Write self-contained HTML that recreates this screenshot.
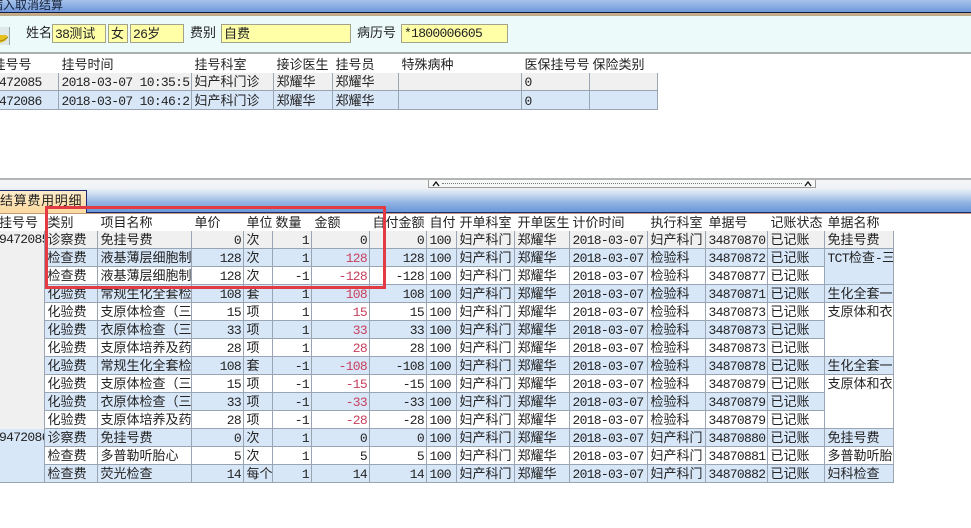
<!DOCTYPE html>
<html lang="zh"><head><meta charset="utf-8"><title>病人取消结算</title>
<style>
html,body{margin:0;padding:0;background:#fff}
body{width:971px;height:528px;overflow:hidden;position:relative;font:13px/18px "Liberation Sans","Noto Sans CJK SC",sans-serif;color:#222}
.a{position:absolute}
.l{position:absolute;white-space:nowrap}
.f{position:absolute;top:24px;height:19px;box-sizing:border-box;background:#ffffa8;border:1px solid #a3a38c;line-height:17px;padding-left:2px;white-space:nowrap;overflow:hidden}
.d{font-family:"Liberation Mono",monospace;font-size:13px;letter-spacing:-.7px}
table{position:absolute;border-collapse:separate;border-spacing:0;table-layout:fixed}
td{box-sizing:border-box;height:18px;padding:0 0 0 2.5px;border-right:1px solid #9aa5b3;border-bottom:1px solid #9aa5b3;white-space:nowrap;overflow:hidden;line-height:17px}
tr.h td{height:17px;border:0;background:#fff;padding-left:2.5px}
tr.g td{background:#f0f0f0}
tr.b td{background:#d8e7f8}
tr.w td{background:#fff}
td.n,td.r{font-family:"Liberation Mono",monospace;font-size:13px;letter-spacing:-.7px;padding-top:2px;line-height:15px}
td.r{text-align:right;padding:2px 2px 0 0}
td.m{color:#c63f5c}
tr td.G{background:#f0f0f0;border-bottom:0;padding:1px 0 0;text-indent:-1px;vertical-align:top}
tr td.B{background:#d8e7f8;vertical-align:top}
tr td.W{background:#fff;vertical-align:top}
tr td.F{background:#d8e7f8;padding:1px 0 0;text-indent:-1px;vertical-align:top}
</style></head><body>

<div class="a" style="left:0;top:0;width:971px;height:12px;background:linear-gradient(#a7c3ea,#6f98da)"></div>
<div class="a" style="left:0;top:12px;width:971px;height:1px;background:#141a44"></div>
<div class="a" style="left:0;top:13px;width:971px;height:3px;background:linear-gradient(#c9ad84,#bda98c)"></div>
<div class="a" style="left:0;top:16px;width:971px;height:36px;background:#ecfbfa"></div>
<div class="a" style="left:0;top:52px;width:971px;height:2px;background:#a9b0b0"></div>
<div class="l" style="left:-9px;top:-4px;font-size:12px;color:#16223c">病入取消结算</div>

<div class="a" style="left:0;top:27px;width:9px;height:18px;background:#dfe8e8;border-right:1px solid #9aa"></div>
<svg class="a" style="left:0;top:32px" width="9" height="13"><path d="M0 3L6 3L8 5L5 9L0 11Z" fill="#e6c11c"/><path d="M0 9L4 8L8 5" stroke="#a08410" fill="none"/></svg>

<div class="l" style="left:26px;top:24px">姓名</div>
<div class="f" style="left:52px;width:54px"><span class="d">38</span>测试</div>
<div class="f" style="left:108px;width:20px">女</div>
<div class="f" style="left:130px;width:54px"><span class="d">26</span>岁</div>
<div class="l" style="left:190px;top:24px">费别</div>
<div class="f" style="left:221px;width:130px">自费</div>
<div class="l" style="left:357px;top:24px">病历号</div>
<div class="f d" style="left:401px;width:107px">*1800006605</div>

<table style="left:0;top:56px;width:658px">
<colgroup><col style="width:59px"><col style="width:133px"><col style="width:82px"><col style="width:59px"><col style="width:66px"><col style="width:123px"><col style="width:68px"><col style="width:68px"></colgroup>
<tr class="h"><td style="text-indent:-10px">挂号号</td><td>挂号时间</td><td>挂号科室</td><td>接诊医生</td><td>挂号员</td><td>特殊病种</td><td>医保挂号号</td><td>保险类别</td></tr>
<tr class="g"><td class="n" style="padding:2px 0 0;text-indent:-1px">472085</td><td class="n">2018-03-07 10:35:5</td><td>妇产科门诊</td><td>郑耀华</td><td>郑耀华</td><td></td><td class="n">0</td><td></td></tr>
<tr class="b" style="height:19px"><td class="n" style="padding:2px 0 0;text-indent:-1px">472086</td><td class="n">2018-03-07 10:46:2</td><td>妇产科门诊</td><td>郑耀华</td><td>郑耀华</td><td></td><td class="n">0</td><td></td></tr>
</table>

<div class="a" style="left:0;top:178px;width:971px;height:2px;background:#b4b4b4"></div>
<div class="a" style="left:0;top:180px;width:971px;height:32px;background:linear-gradient(#f4f5f6 0,#f0f3f7 25%,#c9daf0 45%,#8fb2e2 72%,#6b97d8 100%)"></div>
<div class="a" style="left:428px;top:180px;width:388px;height:8px;box-sizing:border-box;background:#f6f8f8;border:1px solid #9a9a9a;border-top:0"></div>
<div class="a" style="left:442px;top:183px;width:360px;border-top:1px dotted #777"></div>
<svg class="a" style="left:432px;top:181px" width="380" height="6"><path d="M1 5L4 1L7 5M373 5L376 1L379 5" stroke="#111" stroke-width="1.3" fill="none"/></svg>
<div class="a" style="left:0;top:212px;width:971px;height:1px;background:#1c2a78"></div>
<div class="a" style="left:0;top:213px;width:971px;height:1px;background:#c39a78"></div>
<div class="a" style="left:-1px;top:190px;width:88px;height:23px;box-sizing:border-box;border:1px solid #1c2a78;border-bottom:0;background:linear-gradient(#fdeccb,#fbd9a0);line-height:20px;white-space:nowrap;overflow:hidden;color:#222;letter-spacing:.7px">结算费用明细</div>

<table style="left:0;top:214px;width:894px">
<colgroup><col style="width:45px"><col style="width:53px"><col style="width:94px"><col style="width:52px"><col style="width:29px"><col style="width:39px"><col style="width:58px"><col style="width:57px"><col style="width:30px"><col style="width:58px"><col style="width:55px"><col style="width:78px"><col style="width:58px"><col style="width:62px"><col style="width:57px"><col style="width:69px"></colgroup>
<tr class="h"><td style="padding:0;text-indent:-1px">挂号号</td><td>类别</td><td>项目名称</td><td>单价</td><td>单位</td><td>数量</td><td>金额</td><td>自付金额</td><td>自付</td><td>开单科室</td><td>开单医生</td><td>计价时间</td><td>执行科室</td><td>单据号</td><td>记账状态</td><td>单据名称</td></tr>
<tr class="g"><td class="n G" rowspan="11">9472085</td><td>诊察费</td><td>免挂号费</td><td class="r">0</td><td>次</td><td class="r">1</td><td class="r">0</td><td class="r">0</td><td class="n">100</td><td>妇产科门</td><td>郑耀华</td><td class="n">2018-03-07</td><td>妇产科门</td><td class="n">34870870</td><td>已记账</td><td>免挂号费</td></tr>
<tr class="b"><td>检查费</td><td>液基薄层细胞制</td><td class="r">128</td><td>次</td><td class="r">1</td><td class="r m">128</td><td class="r">128</td><td class="n">100</td><td>妇产科门</td><td>郑耀华</td><td class="n">2018-03-07</td><td>检验科</td><td class="n">34870872</td><td>已记账</td><td class="B" rowspan="2"><span class="d">TCT</span>检查<span class="d">-</span>三</td></tr>
<tr class="w"><td>检查费</td><td>液基薄层细胞制</td><td class="r">128</td><td>次</td><td class="r">-1</td><td class="r m">-128</td><td class="r">-128</td><td class="n">100</td><td>妇产科门</td><td>郑耀华</td><td class="n">2018-03-07</td><td>检验科</td><td class="n">34870877</td><td>已记账</td></tr>
<tr class="b"><td>化验费</td><td>常规生化全套检</td><td class="r">108</td><td>套</td><td class="r">1</td><td class="r m">108</td><td class="r">108</td><td class="n">100</td><td>妇产科门</td><td>郑耀华</td><td class="n">2018-03-07</td><td>检验科</td><td class="n">34870871</td><td>已记账</td><td>生化全套一</td></tr>
<tr class="w"><td>化验费</td><td>支原体检查（三</td><td class="r">15</td><td>项</td><td class="r">1</td><td class="r m">15</td><td class="r">15</td><td class="n">100</td><td>妇产科门</td><td>郑耀华</td><td class="n">2018-03-07</td><td>检验科</td><td class="n">34870873</td><td>已记账</td><td class="W" rowspan="3">支原体和衣</td></tr>
<tr class="b"><td>化验费</td><td>衣原体检查（三</td><td class="r">33</td><td>项</td><td class="r">1</td><td class="r m">33</td><td class="r">33</td><td class="n">100</td><td>妇产科门</td><td>郑耀华</td><td class="n">2018-03-07</td><td>检验科</td><td class="n">34870873</td><td>已记账</td></tr>
<tr class="w"><td>化验费</td><td>支原体培养及药</td><td class="r">28</td><td>项</td><td class="r">1</td><td class="r m">28</td><td class="r">28</td><td class="n">100</td><td>妇产科门</td><td>郑耀华</td><td class="n">2018-03-07</td><td>检验科</td><td class="n">34870873</td><td>已记账</td></tr>
<tr class="b"><td>化验费</td><td>常规生化全套检</td><td class="r">108</td><td>套</td><td class="r">-1</td><td class="r m">-108</td><td class="r">-108</td><td class="n">100</td><td>妇产科门</td><td>郑耀华</td><td class="n">2018-03-07</td><td>检验科</td><td class="n">34870878</td><td>已记账</td><td>生化全套一</td></tr>
<tr class="w"><td>化验费</td><td>支原体检查（三</td><td class="r">15</td><td>项</td><td class="r">-1</td><td class="r m">-15</td><td class="r">-15</td><td class="n">100</td><td>妇产科门</td><td>郑耀华</td><td class="n">2018-03-07</td><td>检验科</td><td class="n">34870879</td><td>已记账</td><td class="W" rowspan="3">支原体和衣</td></tr>
<tr class="b"><td>化验费</td><td>衣原体检查（三</td><td class="r">33</td><td>项</td><td class="r">-1</td><td class="r m">-33</td><td class="r">-33</td><td class="n">100</td><td>妇产科门</td><td>郑耀华</td><td class="n">2018-03-07</td><td>检验科</td><td class="n">34870879</td><td>已记账</td></tr>
<tr class="w"><td>化验费</td><td>支原体培养及药</td><td class="r">28</td><td>项</td><td class="r">-1</td><td class="r m">-28</td><td class="r">-28</td><td class="n">100</td><td>妇产科门</td><td>郑耀华</td><td class="n">2018-03-07</td><td>检验科</td><td class="n">34870879</td><td>已记账</td></tr>
<tr class="b"><td class="n F" rowspan="3">9472086</td><td>诊察费</td><td>免挂号费</td><td class="r">0</td><td>次</td><td class="r">1</td><td class="r">0</td><td class="r">0</td><td class="n">100</td><td>妇产科门</td><td>郑耀华</td><td class="n">2018-03-07</td><td>妇产科门</td><td class="n">34870880</td><td>已记账</td><td>免挂号费</td></tr>
<tr class="w"><td>检查费</td><td>多普勒听胎心</td><td class="r">5</td><td>次</td><td class="r">1</td><td class="r">5</td><td class="r">5</td><td class="n">100</td><td>妇产科门</td><td>郑耀华</td><td class="n">2018-03-07</td><td>妇产科门</td><td class="n">34870881</td><td>已记账</td><td>多普勒听胎</td></tr>
<tr class="b"><td>检查费</td><td>荧光检查</td><td class="r">14</td><td>每个</td><td class="r">1</td><td class="r">14</td><td class="r">14</td><td class="n">100</td><td>妇产科门</td><td>郑耀华</td><td class="n">2018-03-07</td><td>妇产科门</td><td class="n">34870882</td><td>已记账</td><td>妇科检查</td></tr>
</table>

<div class="a" style="left:45px;top:206px;width:341px;height:83px;box-sizing:border-box;border:3px solid #e33b44"></div>
</body></html>
